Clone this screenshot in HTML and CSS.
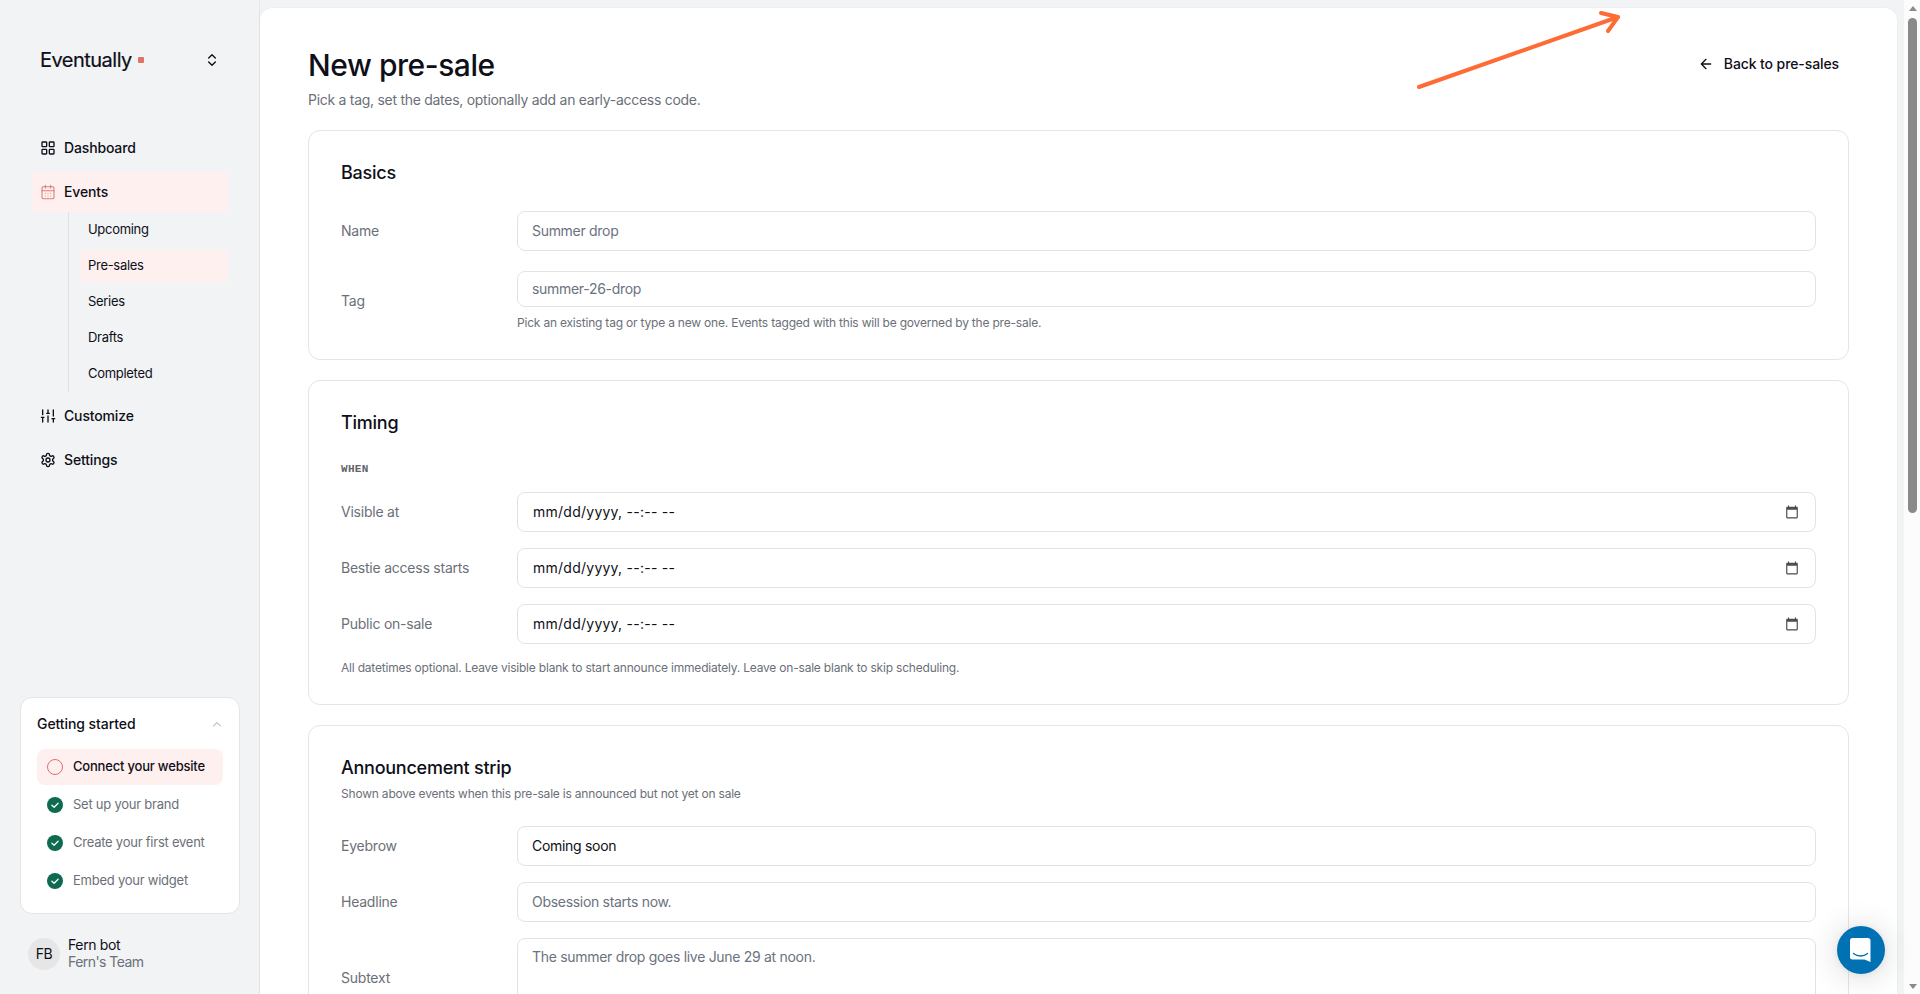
FILE: index.html
```html
<!DOCTYPE html>
<html lang="en">
<head>
<meta charset="utf-8">
<title>New pre-sale</title>
<link rel="stylesheet" href="styles.css">
</head>
<body>
<div class="app">
  <aside class="sidebar">
    <div class="brand">
      <span class="brand-name">Eventually</span><span class="brand-dot"></span>
      <svg class="brand-switch" width="16" height="16" viewBox="0 0 24 24"><path d="m7 15 5 5 5-5M7 9l5-5 5 5"/></svg>
    </div>
    <nav class="nav">
      <a class="nav-item"><svg class="icon" viewBox="0 0 24 24"><rect x="3" y="3" width="7" height="7" rx="1"/><rect x="14" y="3" width="7" height="7" rx="1"/><rect x="14" y="14" width="7" height="7" rx="1"/><rect x="3" y="14" width="7" height="7" rx="1"/></svg><span>Dashboard</span></a>
      <a class="nav-item active"><svg class="icon" viewBox="0 0 24 24"><path d="M8 2v4M16 2v4M3 10h18M8 14h.01M12 14h.01M16 14h.01M8 18h.01M12 18h.01M16 18h.01"/><rect x="3" y="4" width="18" height="18" rx="2"/></svg><span>Events</span></a>
      <div class="subnav">
        <a class="sub">Upcoming</a>
        <a class="sub current">Pre-sales</a>
        <a class="sub">Series</a>
        <a class="sub">Drafts</a>
        <a class="sub">Completed</a>
      </div>
      <a class="nav-item"><svg class="icon" viewBox="0 0 24 24"><path d="M4 21v-7M4 10V3M12 21v-9M12 8V3M20 21v-5M20 12V3M2 14h4M10 8h4M18 16h4"/></svg><span>Customize</span></a>
      <a class="nav-item"><svg class="icon" viewBox="0 0 24 24"><path d="M12.22 2h-.44a2 2 0 0 0-2 2v.18a2 2 0 0 1-1 1.73l-.43.25a2 2 0 0 1-2 0l-.15-.08a2 2 0 0 0-2.73.73l-.22.38a2 2 0 0 0 .73 2.73l.15.1a2 2 0 0 1 1 1.72v.51a2 2 0 0 1-1 1.74l-.15.09a2 2 0 0 0-.73 2.73l.22.38a2 2 0 0 0 2.73.73l.15-.08a2 2 0 0 1 2 0l.43.25a2 2 0 0 1 1 1.73V20a2 2 0 0 0 2 2h.44a2 2 0 0 0 2-2v-.18a2 2 0 0 1 1-1.73l.43-.25a2 2 0 0 1 2 0l.15.08a2 2 0 0 0 2.73-.73l.22-.39a2 2 0 0 0-.73-2.73l-.15-.08a2 2 0 0 1-1-1.74v-.5a2 2 0 0 1 1-1.74l.15-.09a2 2 0 0 0 .73-2.73l-.22-.38a2 2 0 0 0-2.73-.73l-.15.08a2 2 0 0 1-2 0l-.43-.25a2 2 0 0 1-1-1.73V4a2 2 0 0 0-2-2z"/><circle cx="12" cy="12" r="3"/></svg><span>Settings</span></a>
    </nav>
    <section class="onboarding">
      <header class="ob-head"><span>Getting started</span><svg width="12" height="12" viewBox="0 0 24 24"><path d="m5 16 7-7 7 7"/></svg></header>
      <div class="step next"><span class="ring"></span><span class="step-text">Connect your website</span></div>
      <div class="step"><svg class="done" viewBox="0 0 16 16"><circle cx="8" cy="8" r="8"/><path d="m4.900 8.300 2.200 2 4-4"/></svg><span class="step-text">Set up your brand</span></div>
      <div class="step"><svg class="done" viewBox="0 0 16 16"><circle cx="8" cy="8" r="8"/><path d="m4.900 8.300 2.200 2 4-4"/></svg><span class="step-text">Create your first event</span></div>
      <div class="step"><svg class="done" viewBox="0 0 16 16"><circle cx="8" cy="8" r="8"/><path d="m4.900 8.300 2.200 2 4-4"/></svg><span class="step-text">Embed your widget</span></div>
    </section>
    <div class="user">
      <span class="avatar">FB</span>
      <div class="user-text"><span class="user-name">Fern bot</span><span class="user-team">Fern's Team</span></div>
    </div>
  </aside>
  <main class="main">
    <header class="page-head">
      <div>
        <h1 class="title">New pre-sale</h1>
        <p class="subtitle">Pick a tag, set the dates, optionally add an early-access code.</p>
      </div>
      <a class="back"><svg width="16" height="16" viewBox="0 0 24 24"><path d="m12 19-7-7 7-7M19 12H5"/></svg><span>Back to pre-sales</span></a>
    </header>
    <section class="card basics">
      <h2 class="card-title">Basics</h2>
      <div class="row"><label class="label">Name</label><div class="field muted"><span>Summer drop</span></div></div>
      <div class="row tag-row"><label class="label">Tag</label>
        <div class="stack"><div class="field short muted"><span>summer-26-drop</span></div><p class="hint">Pick an existing tag or type a new one. Events tagged with this will be governed by the pre-sale.</p></div>
      </div>
    </section>
    <section class="card timing">
      <h2 class="card-title">Timing</h2>
      <h3 class="group">WHEN</h3>
      <div class="row"><label class="label">Visible at</label><div class="field date"><span>mm/dd/yyyy, --:-- --</span><svg class="cal" viewBox="0 0 24 24"><path d="M20 3h-1V1h-2v2H7V1H5v2H4c-1.100 0-2 .9-2 2v16c0 1.100.9 2 2 2h16c1.100 0 2-.9 2-2V5c0-1.100-.9-2-2-2zm0 18H4V8h16v13z"/></svg></div></div>
      <div class="row"><label class="label">Bestie access starts</label><div class="field date"><span>mm/dd/yyyy, --:-- --</span><svg class="cal" viewBox="0 0 24 24"><path d="M20 3h-1V1h-2v2H7V1H5v2H4c-1.100 0-2 .9-2 2v16c0 1.100.9 2 2 2h16c1.100 0 2-.9 2-2V5c0-1.100-.9-2-2-2zm0 18H4V8h16v13z"/></svg></div></div>
      <div class="row"><label class="label">Public on-sale</label><div class="field date"><span>mm/dd/yyyy, --:-- --</span><svg class="cal" viewBox="0 0 24 24"><path d="M20 3h-1V1h-2v2H7V1H5v2H4c-1.100 0-2 .9-2 2v16c0 1.100.9 2 2 2h16c1.100 0 2-.9 2-2V5c0-1.100-.9-2-2-2zm0 18H4V8h16v13z"/></svg></div></div>
      <p class="hint">All datetimes optional. Leave visible blank to start announce immediately. Leave on-sale blank to skip scheduling.</p>
    </section>
    <section class="card strip">
      <h2 class="card-title">Announcement strip</h2>
      <p class="hint">Shown above events when this pre-sale is announced but not yet on sale</p>
      <div class="row first"><label class="label">Eyebrow</label><div class="field"><span>Coming soon</span></div></div>
      <div class="row"><label class="label">Headline</label><div class="field muted"><span>Obsession starts now.</span></div></div>
      <div class="row"><label class="label">Subtext</label><div class="field area muted"><span>The summer drop goes live June 29 at noon.</span></div></div>
    </section>
  </main>
  <div class="scrollbar"><i class="up"></i><i class="thumb"></i><i class="down"></i></div>
</div>
<svg class="pointer" width="220" height="90" viewBox="0 0 220 90"><path d="M19 87 218 17M201 13l17 4-10 14"/></svg>
<div class="chat"><svg width="24" height="26" viewBox="0 0 24 26"><path class="bubble" d="M3.500 1h15A2.500 2.500 0 0 1 21.500 3.500V25L15.500 22.500h-12A2.500 2.500 0 0 1 1 20V3.500A2.500 2.500 0 0 1 3.500 1z"/><path class="smile" d="M4.500 16.500c4 3.300 10 3.300 14 0"/></svg></div>
</body>
</html>
```
FILE: styles.css
```css
* { box-sizing: border-box; }
body {
  margin: 0;
  height: 994px;
  overflow: hidden;
  background: #f1f3f5;
  color: #0e0f18;
  font: 400 14px/20px Inter, "Liberation Sans", sans-serif;
}
h1, h2, h3, p { margin: 0; font-weight: 400; }
svg { fill: none; stroke: currentColor; stroke-width: 2; stroke-linecap: round; stroke-linejoin: round; flex: none; }
.app { display: flex; height: 994px; overflow: hidden; }

.sidebar { width: 260px; flex: none; display: flex; flex-direction: column; border-right: 1px solid #e5e6e8; }
.brand { display: flex; align-items: center; height: 40px; margin-top: 40px; padding: 0 39px 0 40px; }
.brand-name { font-size: 20px; line-height: 24px; letter-spacing: -.52px; -webkit-text-stroke: .2px; }
.brand-dot { width: 6px; height: 6px; margin-left: 6px; border-radius: 1px; background: #e07462; }
.brand-switch { margin-left: auto; }
.nav { display: flex; flex-direction: column; gap: 4px; margin-top: 48px; padding: 0 31px 0 32px; }
.nav-item { display: flex; align-items: center; gap: 8px; height: 40px; padding-left: 8px; border-radius: 4px; font-weight: 500; letter-spacing: -.15px; }
.icon { width: 16px; height: 16px; }
.active { background: #fef0ee; }
.active .icon { color: #e07b74; stroke-width: 1.600; }
.subnav { display: flex; flex-direction: column; gap: 4px; margin: -4px 0 0 36px; padding: 2px 0 2px 11px; border-left: 1px solid #dfe1e3; }
.sub { height: 32px; padding: 0 8px; border-radius: 4px; font-size: 13px; line-height: 30px; letter-spacing: -.3px; }
.current { background: #fef0ee; }
.onboarding { margin: auto 19px 0 20px; height: 217px; padding: 16px; border: 1px solid #e4e5e7; border-radius: 12px; background: #fff; }
.ob-head { display: flex; align-items: center; justify-content: space-between; height: 20px; margin-bottom: 15px; font-weight: 500; letter-spacing: -.08px; }
.ob-head svg { color: #9a9ea5; }
.step { display: flex; align-items: center; gap: 10px; height: 36px; margin-bottom: 2px; padding-left: 10px; border-radius: 8px; color: #6b7078; font-size: 13px; letter-spacing: -.24px; }
.step-text { padding-bottom: 2px; }
.next { background: #fef0ee; color: #0e0f18; font-weight: 500; letter-spacing: -.2px; }
.ring, .done { width: 16px; height: 16px; flex: none; }
.ring { border: 1px solid #e07070; border-radius: 50%; }
.done { stroke: none; }
.done circle { fill: #0f6b4f; }
.done path { stroke: #fff; stroke-width: 1.300; }
.user { display: flex; align-items: center; gap: 8px; height: 32px; margin: 24px 0 24px 28px; letter-spacing: -.35px; }
.avatar { display: grid; place-items: center; width: 32px; height: 32px; border-radius: 50%; background: #e6e6e6; }
.user-text { display: flex; flex-direction: column; padding-bottom: 2px; line-height: 17px; }
.user-team { color: #6b7078; letter-spacing: -.55px; }

.main { flex: 1; height: 1100px; margin: 8px 7px 0 0; padding: 40px 48px 0; border-radius: 12px 12px 0 0; background: #fff; box-shadow: 0 0 2px rgba(0, 0, 0, .08); }
.page-head { display: flex; justify-content: space-between; height: 82px; }
.title { height: 36px; font-size: 30px; font-weight: 500; line-height: 34px; letter-spacing: -.45px; }
.subtitle { margin-top: 6px; color: #6b7078; letter-spacing: -.28px; }
.back { display: flex; align-items: center; gap: 10px; height: 32px; padding-right: 10px; font-weight: 500; letter-spacing: -.1px; }
.card { padding: 32px; border: 1px solid #e4e5e7; border-radius: 12px; background: #fff; margin-bottom: 20px; }
.basics { height: 230px; }
.timing { height: 325px; }
.strip { height: 400px; }
.card-title { height: 20px; font-size: 18px; font-weight: 500; line-height: 20px; letter-spacing: -.25px; }
.row { display: grid; grid-template-columns: 176px 1fr; align-items: center; margin-bottom: 16px; }
.basics .row { margin: 28px 0 20px; }
.basics .tag-row { margin-top: 0; }
.label { color: #6b7078; letter-spacing: -.23px; }
.field { display: flex; align-items: center; height: 40px; padding: 0 15px 0 14px; border: 1px solid #e1e3e6; border-radius: 8px; background: #fff; letter-spacing: -.3px; }
.muted { color: #6b7280; }
.short { height: 36px; }
.area { height: 80px; align-items: flex-start; padding-top: 8px; }
.date { justify-content: space-between; padding-left: 15px; letter-spacing: .25px; }
.cal { width: 14px; height: 14px; margin-right: 1px; fill: #4d4d4d; stroke: none; }
.hint { color: #6b7078; font-size: 12px; line-height: 16px; letter-spacing: -.2px; }
.stack .hint { margin-top: 8px; }
.group { height: 12px; margin: 30px 0 17px; color: #5f656d; font: 700 11px/12px "Liberation Mono", monospace; letter-spacing: .3px; }
.strip .hint { margin-top: 8px; }
.strip .first { margin-top: 24px; }

.scrollbar { display: flex; flex-direction: column; align-items: center; width: 16px; flex: none; height: 994px; padding: 6px 1px 5px 2px; background: #fcfcfc; }
.up, .down { border: 4.500px solid transparent; }
.up { border-top: 0; border-bottom: 5px solid #8a8a8a; }
.down { margin-top: auto; border-bottom: 0; border-top: 5px solid #8a8a8a; }
.thumb { width: 9px; height: 495px; margin-top: 7px; border-radius: 5px; background: #8a8a8a; }

.pointer { position: absolute; left: 1400px; top: 0; color: #ff6b35; stroke-width: 4; }
.chat { position: absolute; left: 1837px; top: 926px; display: grid; place-items: center; width: 48px; height: 48px; border-radius: 50%; background: #0071b2; box-shadow: 0 1px 6px rgba(0, 0, 0, .06), 0 2px 32px rgba(0, 0, 0, .16); }
.bubble { fill: #fff; stroke: none; }
.smile { stroke: #0071b2; stroke-width: 1.300; }
```
